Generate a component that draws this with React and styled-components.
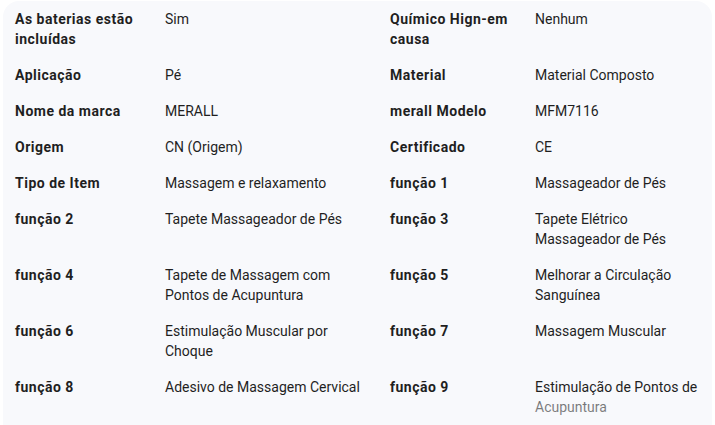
import React from "react"
import styled, { createGlobalStyle } from "styled-components"

const GlobalStyle = createGlobalStyle`
  html, body {
    margin: 0;
    padding: 0;
    background: #ffffff;
  }
  body {
    font-family: Roboto, "Liberation Sans", Arial, sans-serif;
    -webkit-font-smoothing: antialiased;
  }
`

const Panel = styled.div`
  position: relative;
  margin: 1px 3px 0 3px;
  height: 440px;
  background: #f8f9fc;
  border-radius: 16px 16px 0 0;
  overflow: hidden;

  &::after {
    content: "";
    position: absolute;
    left: 0;
    right: 0;
    top: 396px;
    height: 40px;
    background: linear-gradient(rgba(248, 249, 252, 0.35), rgba(248, 249, 252, 0.6));
    pointer-events: none;
  }
`

const Table = styled.div`
  display: grid;
  grid-template-columns: 150px 225px 145px 1fr;
  padding: 0 0 0 12px;
`

const Cell = styled.div`
  padding: 8px ${(p) => (p.$last ? "4px" : "16px")} 8px 0;
  font-size: 14px;
  line-height: 20px;
  color: #1f1f1f;
  font-weight: ${(p) => (p.$label ? 700 : 400)};
  letter-spacing: ${(p) => (p.$label ? "0.5px" : "0")};
`

const rows = [
  ["As baterias estão incluídas", "Sim", "Químico Hign-em causa", "Nenhum"],
  ["Aplicação", "Pé", "Material", "Material Composto"],
  ["Nome da marca", "MERALL", "merall Modelo", "MFM7116"],
  ["Origem", "CN (Origem)", "Certificado", "CE"],
  ["Tipo de Item", "Massagem e relaxamento", "função 1", "Massageador de Pés"],
  ["função 2", "Tapete Massageador de Pés", "função 3", "Tapete Elétrico Massageador de Pés"],
  ["função 4", "Tapete de Massagem com Pontos de Acupuntura", "função 5", "Melhorar a Circulação Sanguínea"],
  ["função 6", "Estimulação Muscular por Choque", "função 7", "Massagem Muscular"],
  ["função 8", "Adesivo de Massagem Cervical", "função 9", "Estimulação de Pontos de Acupuntura"],
]

const App = () => {
  return (
    <>
      <GlobalStyle />
      <Panel>
        <Table>
          {rows.map((row, i) => (
            <React.Fragment key={i}>
              <Cell $label>{row[0]}</Cell>
              <Cell>{row[1]}</Cell>
              <Cell $label>{row[2]}</Cell>
              <Cell $last>{row[3]}</Cell>
            </React.Fragment>
          ))}
        </Table>
      </Panel>
    </>
  )
}

export default App
